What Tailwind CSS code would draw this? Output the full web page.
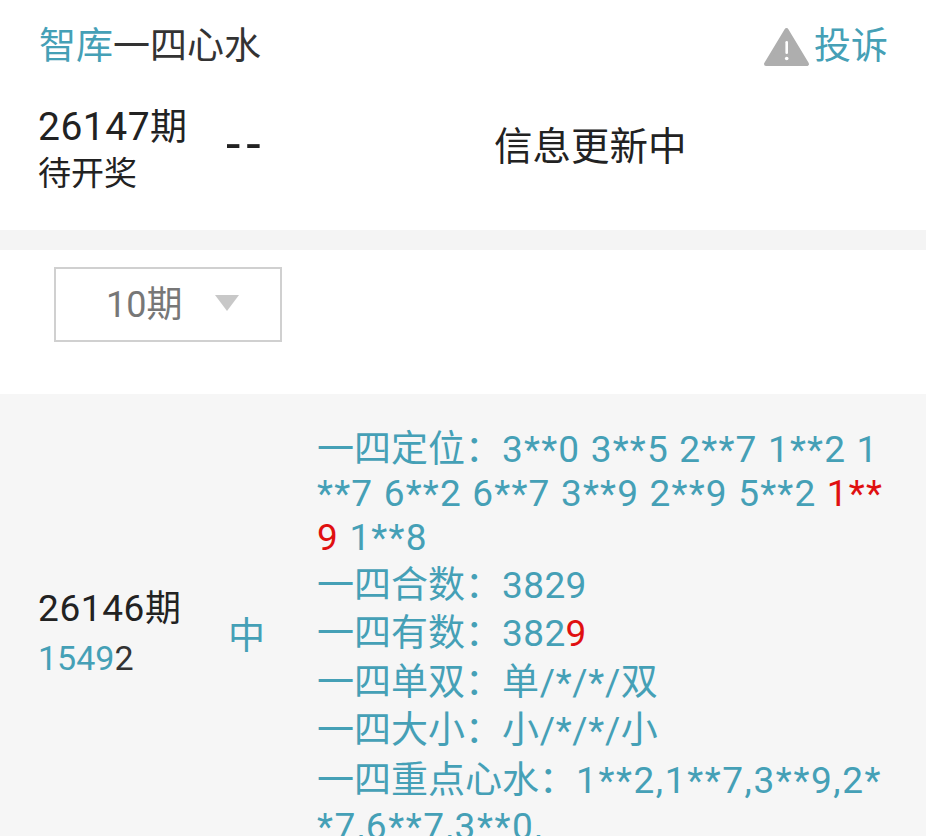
<!DOCTYPE html>
<html lang="zh-CN">
  <head>
    <meta charset="UTF-8" />
    <meta name="viewport" content="width=device-width, initial-scale=1.0" />
    <title>智库一四心水</title>
    <script src="https://cdn.jsdelivr.net/npm/@tailwindcss/browser@4"></script>
  </head>
  <body class="bg-white h-[836px] overflow-hidden font-['Roboto','Noto_Sans_CJK_SC',sans-serif]">
    <header class="h-[90px] pt-[4px] pl-[39px] pr-[38px] flex items-center justify-between text-[37px] leading-[44px]">
      <h1 class="font-normal text-[#333]"><span class="text-[#45a0b6]">智库</span>一四心水</h1>
      <a class="flex items-center text-[#45a0b6]">
        <svg class="w-[47px] h-[40px] mr-[4px]" viewBox="0 0 47 40">
          <path d="M23.5 3 L44 37 H3 Z" fill="#aeaeae" stroke="#aeaeae" stroke-width="4" stroke-linejoin="round" />
          <rect x="22.4" y="14" width="2.6" height="13" rx="1.3" fill="#fff" />
          <circle cx="23.7" cy="31.5" r="1.8" fill="#fff" />
        </svg>
        投诉
      </a>
    </header>

    <section class="h-[140px] flex pl-[38px] text-[#222]">
      <div class="w-[188px] pt-[14px]">
        <div class="text-[39px] leading-[46px] tracking-[0.5px]">26147<span class="text-[37px] tracking-normal">期</span></div>
        <div class="text-[33px] leading-[44px] mt-[1px]">待开奖</div>
      </div>
      <div class="w-[268px] pt-[32px] text-[52px] leading-[46px] tracking-[6px]">--</div>
      <div class="pt-[34px] text-[38.5px] leading-[46px]">信息更新中</div>
    </section>

    <div class="h-[20px] bg-[#f4f4f4]"></div>

    <section class="h-[144px] pt-[17px] pl-[54px]">
      <div class="w-[228px] h-[75px] border-2 border-[#d0d0d0] flex items-center pl-[50px] text-[36px] text-[#777]">
        10期
        <svg class="w-[24px] h-[16px] ml-[33px] -mt-[3px]" viewBox="0 0 24 16"><path d="M0 0 H24 L12 16 Z" fill="#c8c8c8" /></svg>
      </div>
    </section>

    <section class="bg-[#f6f6f6] flex pt-[34px]">
      <div class="w-[190px] pl-[38px] shrink-0 pt-[157px]">
        <div class="text-[37px] leading-[48px] text-[#222] tracking-[0.6px]">26146<span class="text-[36px]">期</span></div>
        <div class="text-[34px] leading-[44px] text-[#333] mt-[3px]"><span class="text-[#45a0b6]">1549</span>2</div>
      </div>
      <div class="w-[87px] shrink-0 text-[37px] leading-[48px] text-[#45a0b6] pl-[40px] pt-[185px] -ml-[2px] mr-[2px]">中</div>
      <div class="ml-[40px] w-[570px] text-[37px] leading-[44px] text-[#45a0b6] break-all">
        <p class="mb-[4px]">一四定位：<span class="tracking-[1.2px]">3**0 3**5 2**7 1**2 1**7 6**2 6**7 3**9 2**9 5**2 <span class="text-[#e01010]">1**9</span> 1**8</span></p>
        <p class="mb-[4px]">一四合数：<span class="tracking-[0.4px]">3829</span></p>
        <p class="mb-[5px]">一四有数：<span class="tracking-[0.4px]">382<span class="text-[#e01010]">9</span></span></p>
        <p class="mb-[4px]">一四单双：<span class="tracking-[0.7px]">单/*/*/双</span></p>
        <p class="mb-[5px]">一四大小：<span class="tracking-[0.7px]">小/*/*/小</span></p>
        <p class="leading-[46px]">一四重点心水：<span class="tracking-[1.6px]">1**2,1**7,3**9,2**7,6**7,3**0,</span></p>
      </div>
    </section>
  </body>
</html>
